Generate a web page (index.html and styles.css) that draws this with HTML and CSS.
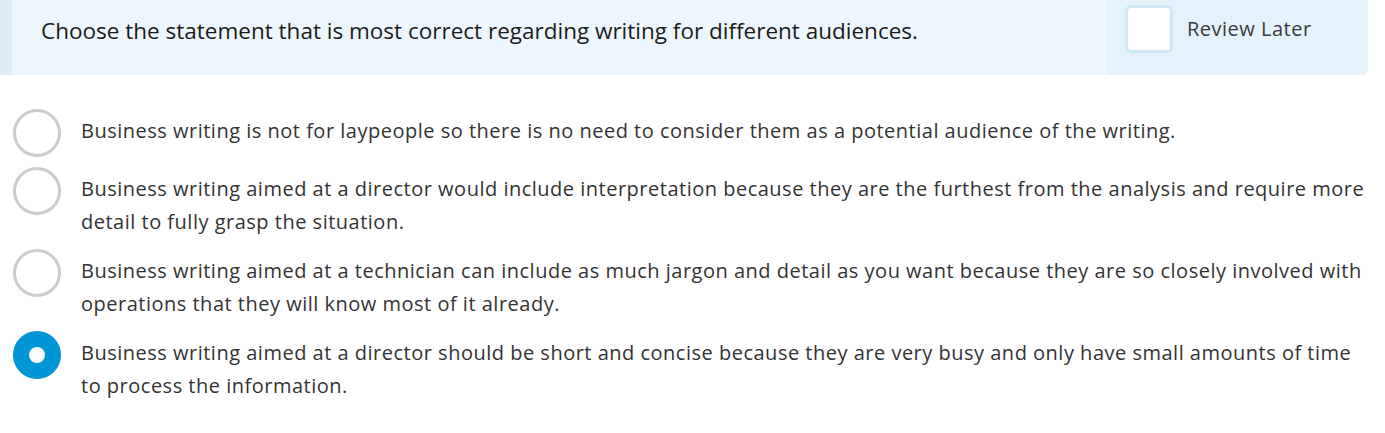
FILE: index.html
```html
<!DOCTYPE html>
<html lang="en">
<head>
<meta charset="utf-8">
<title>Question</title>
<link rel="stylesheet" href="styles.css">
</head>
<body>
<div class="question-bar">
  <div class="question-text">Choose the statement that is most correct regarding writing for different audiences.</div>
  <label class="review">
    <span class="review-box"></span>
    <span class="review-label">Review Later</span>
  </label>
</div>
<ul class="options">
  <li class="option">
    <span class="radio"></span>
    <span class="option-text">Business writing is not for laypeople so there is no need to consider them as a potential audience of the writing.</span>
  </li>
  <li class="option">
    <span class="radio"></span>
    <span class="option-text">Business writing aimed at a director would include interpretation because they are the furthest from the analysis and require more detail to fully grasp the situation.</span>
  </li>
  <li class="option">
    <span class="radio"></span>
    <span class="option-text">Business writing aimed at a technician can include as much jargon and detail as you want because they are so closely involved with operations that they will know most of it already.</span>
  </li>
  <li class="option">
    <span class="radio radio-checked"></span>
    <span class="option-text">Business writing aimed at a director should be short and concise because they are very busy and only have small amounts of time to process the information.</span>
  </li>
</ul>
</body>
</html>
```
FILE: styles.css
```css
* { box-sizing: border-box; }
html, body { margin: 0; padding: 0; background: #ffffff; }
body {
  font-family: "Open Sans", "Liberation Sans", sans-serif;
  color: #333333;
  width: 1385px;
}
.question-bar {
  display: flex;
  width: 1368px;
  height: 75px;
  background: #edf6fc;
  border-left: 12px solid #dcedf7;
  border-bottom-right-radius: 6px;
  overflow: hidden;
}
.question-text {
  flex: 1;
  padding-left: 29px;
  padding-top: 15px;
  font-size: 22.5px;
  line-height: 32px;
  color: #1b1b1b;
}
.review {
  width: 261px;
  background: #e3f2fb;
  display: flex;
  align-items: flex-start;
  height: 75px;
  padding-left: 18px;
  padding-top: 5px;
}
.review-box {
  flex: none;
  width: 48px;
  height: 48px;
  background: #ffffff;
  border: 3px solid #cde9f6;
  border-radius: 6px;
}
.review-label {
  margin-left: 14px;
  margin-top: 10px;
  font-size: 20px;
  letter-spacing: 0.5px;
  color: #3a3a3a;
  line-height: 28px;
}
.options {
  list-style: none;
  margin: 31px 0 0 0;
  padding: 0;
  width: 1370px;
}
.option {
  display: flex;
  align-items: flex-start;
  min-height: 58px;
}
.radio {
  flex: none;
  width: 48px;
  height: 48px;
  margin-left: 13px;
  margin-top: 3px;
  border: 3px solid #cccccc;
  border-radius: 50%;
  background: #ffffff;
}
.radio-checked {
  border: 16px solid #0096d6;
}
.option-text {
  margin-left: 20px;
  padding: 8px 0;
  font-size: 20px;
  letter-spacing: 0.5px;
  line-height: 33px;
  color: #333333;
}
```
